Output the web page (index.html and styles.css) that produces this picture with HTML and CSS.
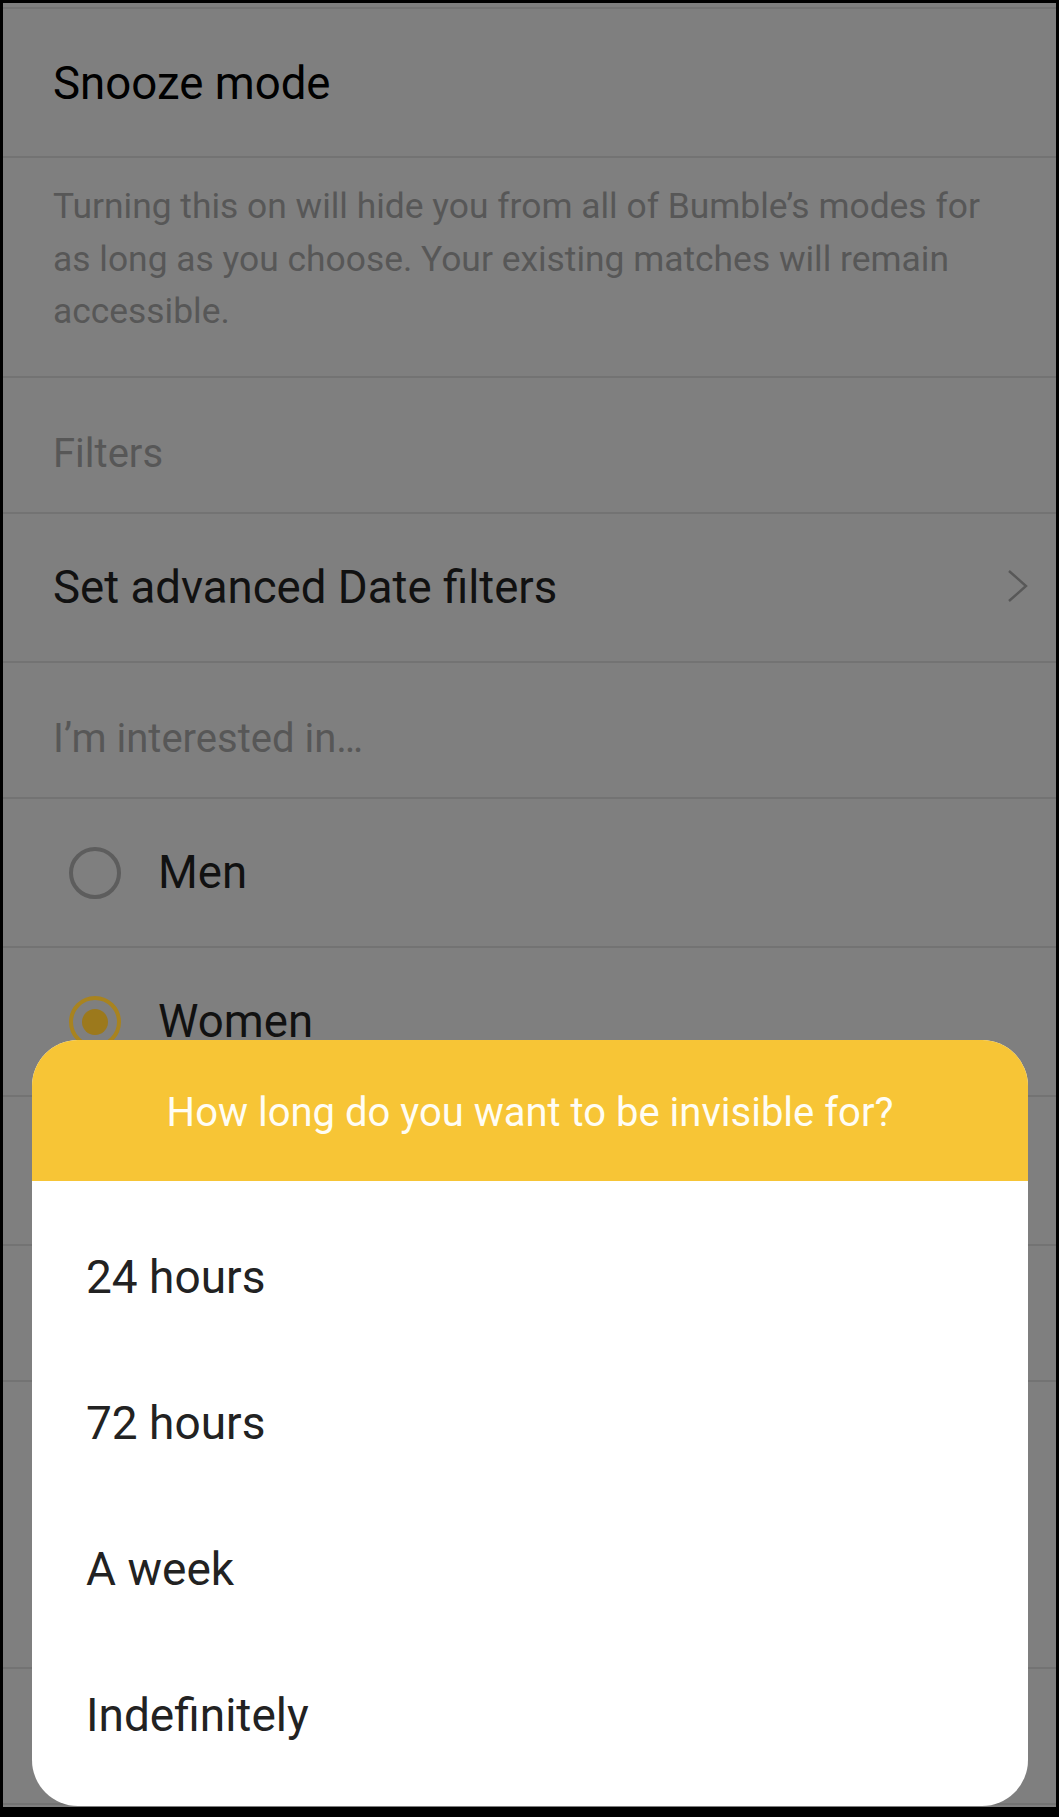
FILE: index.html
```html
<!DOCTYPE html>
<html>
<head>
<meta name="viewport" content="width=device-width, initial-scale=1">
<link rel="stylesheet" href="styles.css">
</head>
<body>

  <div class="screen">
    <div class="settings">
      <div class="row row-title">Snooze mode</div>

      <div class="row row-note">
        Turning this on will hide you from all of Bumble’s modes for as long as you choose. Your existing matches will remain accessible.
      </div>

      <div class="row row-section">Filters</div>

      <div class="row row-link">
        <span>Set advanced Date filters</span>
        <svg class="chevron" width="22" height="34" viewBox="0 0 22 34">
          <polyline points="2,2 19,17 2,32" fill="none" stroke="#585858" stroke-width="2.4"/>
        </svg>
      </div>

      <div class="row row-section">I’m interested in…</div>

      <div class="row row-radio"><span class="radio"></span>Men</div>
      <div class="row row-radio"><span class="radio checked"></span>Women</div>

      <!-- rows hidden under the sheet, only their dividers show -->
      <div class="row row-radio"></div>
      <div class="row row-section"></div>
      <div class="row row-slider"></div>
      <div class="row row-section"></div>
    </div>

    <!-- bottom sheet over the dimmed settings -->
    <div class="sheet">
      <div class="sheet-head">How long do you want to be invisible for?</div>
      <ul class="sheet-list">
        <li>24 hours</li>
        <li>72 hours</li>
        <li>A week</li>
        <li>Indefinitely</li>
      </ul>
    </div>
  </div>

</body>
</html>
```

FILE: styles.css
```css
* {
  box-sizing: border-box;
}

body {
  margin: 0;
  background-color: #000;
  font-family: Roboto, "Noto Sans", Arial, sans-serif;
}

/* Phone screen, dimmed behind the sheet */
.screen {
  position: relative;
  margin: 3px 3px 10px 3px;
  height: 1804px;
  background-color: #7f7f7f;
  overflow: hidden;
}

.settings {
  margin-top: 4px;
  border-top: 2px solid #747474;
}

.row {
  display: flex;
  align-items: center;
  padding: 0 50px;
  border-bottom: 2px solid #737373;
}

.row-title {
  height: 149px;
  padding-top: 2px;
  font-size: 45.6px;
  color: #000;
}

.row-note {
  display: block;
  height: 220px;
  padding-top: 22px;
  padding-right: 40px;
  font-size: 35.4px;
  line-height: 52.7px;
  color: #575757;
}

.row-section {
  height: 136px;
  align-items: flex-start;
  padding-top: 52px;
  font-size: 40px;
  line-height: 48px;
  color: #575757;
}

.row-link {
  height: 149px;
  justify-content: space-between;
  padding-right: 27px;
  font-size: 45.6px;
  color: #111;
}

.chevron {
  margin-top: -4px;
}

.row-radio {
  height: 149px;
  padding-left: 66px;
  font-size: 45.6px;
  color: #111;
}

.row-slider {
  height: 287px;
}

.radio {
  width: 52px;
  height: 52px;
  margin-right: 37px;
  border: 4px solid #5d5d5d;
  border-radius: 50%;
  flex: none;
  display: flex;
  align-items: center;
  justify-content: center;
}

.radio.checked {
  border-color: #a8831f;
}

.radio.checked::after {
  content: "";
  width: 26px;
  height: 26px;
  border-radius: 50%;
  background-color: #9c791c;
}

/* Bottom sheet */
.sheet {
  position: absolute;
  left: 29px;
  right: 28px;
  bottom: 1px;
  height: 766px;
  background-color: #fff;
  border-radius: 46px;
  overflow: hidden;
}

.sheet-head {
  height: 141px;
  display: flex;
  align-items: center;
  justify-content: center;
  padding-top: 4px;
  background-color: #f7c536;
  color: #fffdf4;
  font-size: 40px;
}

.sheet-list {
  list-style: none;
  margin: 0;
  padding: 23px 0 0 0;
}

.sheet-list li {
  height: 146px;
  display: flex;
  align-items: center;
  padding-left: 54px;
  font-size: 46px;
  color: #222;
}
```
